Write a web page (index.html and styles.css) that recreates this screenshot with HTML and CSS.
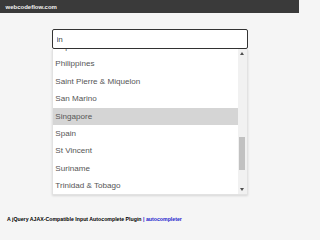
FILE: index.html
```html
<!DOCTYPE html>
<html lang="en">
<head>
<meta charset="utf-8">
<title>autocompleter demo</title>
<link rel="stylesheet" href="styles.css">
</head>
<body>
<header class="topbar"><span class="brand">webcodeflow.com</span></header>
<main class="demo">
  <div class="ac">
    <input class="ac-input" type="text" value="in">
    <div class="ac-menu">
      <ul class="ac-list">
        <li class="ac-item first">Papua New Guinea</li>
        <li class="ac-item">Philippines</li>
        <li class="ac-item">Saint Pierre &amp; Miquelon</li>
        <li class="ac-item">San Marino</li>
        <li class="ac-item active">Singapore</li>
        <li class="ac-item">Spain</li>
        <li class="ac-item">St Vincent</li>
        <li class="ac-item">Suriname</li>
        <li class="ac-item">Trinidad &amp; Tobago</li>
      </ul>
      <div class="ac-scroll">
        <span class="sb-btn"><svg width="4" height="3" viewBox="0 0 4 3"><path d="M0 3 L2 0 L4 3 Z" fill="#505050"/></svg></span>
        <div class="sb-track"><div class="sb-thumb"></div></div>
        <span class="sb-btn"><svg width="4" height="3" viewBox="0 0 4 3"><path d="M0 0 L4 0 L2 3 Z" fill="#505050"/></svg></span>
      </div>
    </div>
  </div>
</main>
<footer class="credit">A jQuery AJAX-Compatible Input Autocomplete Plugin <a class="credit-link" href="#">| autocompleter</a></footer>
</body>
</html>
```
FILE: styles.css
```css
html, body {
  margin: 0;
  padding: 0;
}
body {
  background: #f5f5f5;
  font-family: "Liberation Sans", Arial, sans-serif;
  width: 299px;
  height: 230px;
  overflow: hidden;
}
.topbar {
  height: 13px;
  background: #3a3a3a;
  display: flex;
  align-items: center;
  padding-left: 5.5px;
}
.brand {
  color: #f2f2f2;
  font-weight: bold;
  font-size: 6px;
  line-height: 6px;
}
.demo {
  display: flex;
  justify-content: center;
  padding-top: 16px;
}
.ac {
  width: 196px;
  display: flex;
  flex-direction: column;
}
.ac-input {
  box-sizing: border-box;
  width: 196px;
  height: 20px;
  margin: 0;
  border: 1.3px solid #333;
  border-radius: 2px;
  background: #fff;
  padding: 0 4px;
  font-family: "Liberation Sans", Arial, sans-serif;
  font-size: 8.1px;
  color: #444;
  outline: none;
}
.ac-menu {
  box-sizing: border-box;
  width: 196px;
  height: 146px;
  display: flex;
  background: #fff;
  border: 1px solid #e2e2e2;
  border-top: none;
  box-shadow: 0 1px 2px rgba(0,0,0,0.12);
  overflow: hidden;
}
.ac-list {
  flex: 1;
  margin: 0;
  padding: 0;
  list-style: none;
  overflow: hidden;
}
.ac-item {
  height: 17.43px;
  line-height: 17.43px;
  padding-left: 2.8px;
  font-size: 8.1px;
  color: #555;
  white-space: nowrap;
}
.ac-item.first {
  margin-top: -11.1px;
}
.ac-item.active {
  background: #d5d5d5;
}
.ac-scroll {
  width: 9px;
  display: flex;
  flex-direction: column;
  background: #f1f1f1;
}
.sb-btn {
  height: 9px;
  display: flex;
  align-items: center;
  justify-content: center;
}
.sb-track {
  flex: 1;
  padding-top: 79px;
  display: flex;
  justify-content: center;
}
.sb-thumb {
  width: 6px;
  height: 33px;
  background: #c1c1c1;
}
.credit {
  margin-top: 20.5px;
  padding-left: 7px;
  font-size: 5.22px;
  line-height: 6px;
  font-weight: bold;
  color: #000;
  white-space: nowrap;
}
.credit-link {
  color: #2222cc;
  text-decoration: none;
}
```
